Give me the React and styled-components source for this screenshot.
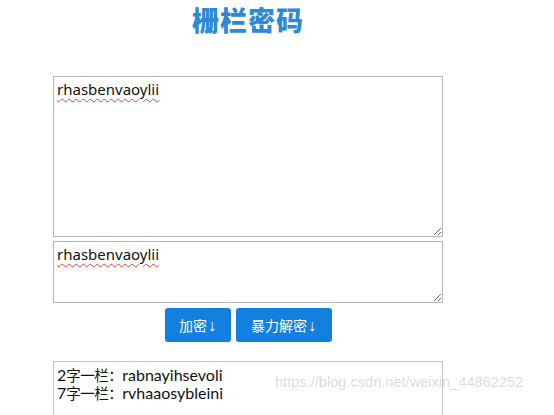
import styled, { createGlobalStyle } from "styled-components";

const GlobalStyle = createGlobalStyle`
  html, body {
    margin: 0;
    padding: 0;
    background: #fff;
    overflow: hidden;
  }
  body {
    font-family: "Noto Sans", "Noto Sans CJK SC", sans-serif;
  }
`;

const Page = styled.div`
  position: relative;
  width: 554px;
  height: 415px;
  overflow: hidden;
`;

const Container = styled.div`
  width: 390px;
  margin-left: 53px;
  display: flex;
  flex-direction: column;
`;

const Title = styled.h1`
  margin: 2px 0 0;
  height: 74px;
  text-align: center;
  font-family: "Noto Sans CJK SC", sans-serif;
  font-size: 27px;
  line-height: 36px;
  font-weight: 900;
  color: #2d89d7;
  letter-spacing: 1px;
`;

const TextBox = styled.textarea`
  box-sizing: border-box;
  width: 390px;
  height: ${(p) => p.$h}px;
  margin: 0 0 ${(p) => p.$mb}px;
  padding: 2px 3px;
  border: 1px solid #b5b5b5;
  font-family: "Noto Sans", "Noto Sans CJK SC", sans-serif;
  font-size: 15px;
  line-height: 20px;
  color: #111;
  resize: vertical;
  outline: none;
  text-decoration: underline wavy #e2443a;
  text-decoration-thickness: 1px;
  text-underline-offset: 3px;
`;

const ButtonRow = styled.div`
  display: flex;
  justify-content: center;
  gap: 5px;
  margin-bottom: 19px;
`;

const Button = styled.button`
  height: 34px;
  width: ${(p) => p.$w}px;
  padding: 0;
  border: none;
  border-radius: 3px;
  background: #1180e0;
  color: #fff;
  font-family: "Noto Sans CJK SC", sans-serif;
  font-size: 14px;
  cursor: pointer;
`;

const Arrow = styled.span`
  font-family: "Liberation Sans", Arial, sans-serif;
  font-size: 16px;
  margin-left: 1px;
`;

const Result = styled.div`
  box-sizing: border-box;
  width: 390px;
  height: 80px;
  padding: 4px 3px;
  border: 1px solid #c4c4c4;
  font-family: "Lato", "Noto Sans CJK SC", sans-serif;
  font-size: 16px;
  line-height: 18px;
  color: #111;
`;

const Line = styled.div`
  white-space: nowrap;
`;

const Cjk = styled.span`
  font-family: "Noto Sans CJK SC", sans-serif;
  font-size: 14.5px;
  letter-spacing: -0.5px;
`;

const Watermark = styled.div`
  position: absolute;
  left: 275px;
  top: 374px;
  font-family: "Liberation Sans", Arial, sans-serif;
  font-size: 14.6px;
  color: rgba(205, 205, 205, 0.7);
  pointer-events: none;
`;

export default function App() {
  return (
    <Page>
      <GlobalStyle />
      <Container>
        <Title>栅栏密码</Title>
        <TextBox $h={161} $mb={4} defaultValue="rhasbenvaoylii" spellCheck={false} />
        <TextBox $h={62} $mb={5} defaultValue="rhasbenvaoylii" spellCheck={false} />
        <ButtonRow>
          <Button $w={66}>
            加密<Arrow>↓</Arrow>
          </Button>
          <Button $w={96}>
            暴力解密<Arrow>↓</Arrow>
          </Button>
        </ButtonRow>
        <Result>
          <Line>
            2<Cjk>字一栏：</Cjk>rabnayihsevoli
          </Line>
          <Line>
            7<Cjk>字一栏：</Cjk>rvhaaosybleini
          </Line>
        </Result>
      </Container>
      <Watermark>https://blog.csdn.net/weixin_44862252</Watermark>
    </Page>
  );
}
